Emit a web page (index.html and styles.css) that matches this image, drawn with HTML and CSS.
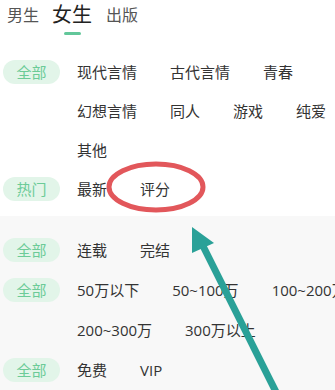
FILE: index.html
```html
<!DOCTYPE html>
<html lang="zh">
<head>
    <meta charset="UTF-8">
    <meta name="viewport" content="width=device-width, initial-scale=1.0">
    <title>分类 - 女生</title>
    <link rel="stylesheet" href="styles.css">
</head>
<body>

<div class="tabs">
    <div class="tab">男生</div>
    <div class="tab active">女生<span class="tab-line"></span></div>
    <div class="tab">出版</div>
</div>

<div class="section">
    <div class="filter-row">
        <span class="pill">全部</span>
        <div class="opts">
            <span>现代言情</span><span>古代言情</span><span>青春</span>
            <span>幻想言情</span><span>同人</span><span>游戏</span><span>纯爱</span>
            <span>其他</span>
        </div>
    </div>
    <div class="filter-row">
        <span class="pill">热门</span>
        <div class="opts">
            <span>最新</span><span>评分</span>
        </div>
    </div>
</div>

<div class="section gray">
    <div class="filter-row">
        <span class="pill">全部</span>
        <div class="opts">
            <span>连载</span><span>完结</span>
        </div>
    </div>
    <div class="filter-row">
        <span class="pill">全部</span>
        <div class="opts">
            <span>50万以下</span><span>50~100万</span><span>100~200万</span>
            <span>200~300万</span><span>300万以上</span>
        </div>
    </div>
    <div class="filter-row">
        <span class="pill">全部</span>
        <div class="opts">
            <span>免费</span><span>VIP</span>
        </div>
    </div>
</div>

<!-- tanda merah & panah di atas konten -->
<svg class="marks" width="335" height="390" viewBox="0 0 335 390">
    <ellipse cx="156" cy="187" rx="47" ry="23" fill="none" stroke="#e2575b" stroke-width="5"/>
    <line x1="202" y1="244" x2="278" y2="396" stroke="#2aa198" stroke-width="7"/>
    <polygon points="192,227 192,253 214,243" fill="#2aa198"/>
</svg>

</body>
</html>
```

FILE: styles.css
```css
body {
    font-family: "Open Sans", "Noto Sans CJK SC", sans-serif;
    margin: 0;
    padding: 0;
    width: 335px;
    height: 390px;
    overflow: hidden;
    position: relative;
    background-color: #fff;
    color: #333;
}
.tabs {
    display: flex;
    align-items: flex-start;
    padding: 0 7px;
    gap: 13px;
    height: 53px;
}
.tab {
    display: flex;
    flex-direction: column;
    align-items: center;
    font-size: 16px;
    line-height: 30px;
    color: #555;
}
.tab.active {
    font-size: 20px;
    color: #222;
    margin-right: 1px;
}
.tab-line {
    width: 17px;
    height: 3px;
    margin-top: 2px;
    border-radius: 2px;
    background-color: #62c79a;
}
.section {
    padding-bottom: 7px;
}
.section.gray {
    background-color: #f8f8f8;
    padding-top: 14px;
    padding-bottom: 0;
}
.filter-row {
    display: flex;
    align-items: flex-start;
}
.pill {
    flex: none;
    width: 57px;
    height: 24px;
    margin: 7px 17px 0 3px;
    border-radius: 12px;
    background-color: #e2f5e9;
    color: #6ccb97;
    font-size: 15px;
    line-height: 24px;
    text-align: center;
}
.opts {
    flex: none;
    width: 285px;
    display: flex;
    flex-wrap: wrap;
    column-gap: 33px;
    font-size: 15px;
    line-height: 39px;
    white-space: nowrap;
}
.gray .opts {
    line-height: 40px;
}
.gray .pill {
    margin-top: 8px;
}
.marks {
    position: absolute;
    top: 0;
    left: 0;
    pointer-events: none;
}
```
